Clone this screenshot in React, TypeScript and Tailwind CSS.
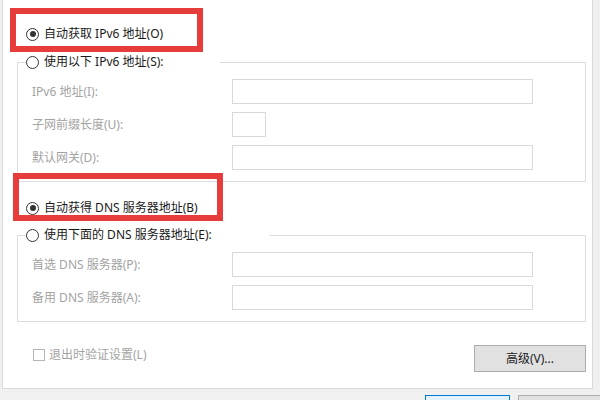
import React from "react";

const Radio = ({ checked, label }: { checked?: boolean; label: string }) => (
	<div className="flex items-center h-[16px]">
		<span className="w-[13px] h-[13px] rounded-full border border-[#333] bg-white flex items-center justify-center">
			{checked && <span className="w-[6px] h-[6px] rounded-full bg-[#333]" />}
		</span>
		<span className="ml-[5px] text-[#1a1a1a] whitespace-nowrap">{label}</span>
	</div>
);

const Field = ({ label, small }: { label: string; small?: boolean }) => (
	<div className="flex items-center h-[25px]">
		<span className="w-[200px] text-[#a3a3a3] whitespace-nowrap">{label}</span>
		<div
			className={
				small
					? "w-[34px] h-[25px] border border-[#d9d9d9] bg-white"
					: "w-[301px] h-[25px] border border-[#d9d9d9] bg-white"
			}
		/>
	</div>
);

const App = () => {
	return (
		<div className="w-[600px] h-[400px] bg-[#f0f0f0] overflow-hidden relative font-['Noto_Sans','Noto_Sans_CJK_SC',sans-serif] text-[12px] leading-[16px]">
			<div className="ml-[2px] w-[591px] h-[389px] bg-white border-l border-r border-b border-[#dadada] pl-[14px] pt-[26px]">
				<div className="ml-[9px]">
					<Radio checked label="自动获取 IPv6 地址(O)" />
				</div>

				<fieldset className="mt-[12px] w-[569px] border border-[#dcdcdc] pb-[11px]">
					<legend className="ml-[8px] w-[194px]">
						<Radio label="使用以下 IPv6 地址(S):" />
					</legend>
					<div className="pt-[9px] pl-[14px] flex flex-col gap-[8px]">
						<Field label="IPv6 地址(I):" />
						<Field label="子网前缀长度(U):" small />
						<Field label="默认网关(D):" />
					</div>
				</fieldset>

				<div className="ml-[9px] mt-[18px]">
					<Radio checked label="自动获得 DNS 服务器地址(B)" />
				</div>

				<fieldset className="mt-[11px] w-[569px] border border-[#dcdcdc] pb-[11px]">
					<legend className="ml-[8px] w-[244px]">
						<Radio label="使用下面的 DNS 服务器地址(E):" />
					</legend>
					<div className="pt-[9px] pl-[14px] flex flex-col gap-[8px]">
						<Field label="首选 DNS 服务器(P):" />
						<Field label="备用 DNS 服务器(A):" />
					</div>
				</fieldset>

				<div className="mt-[23px] w-[569px] flex justify-between items-start">
					<div className="flex items-center pl-[16px] mt-[2px]">
						<span className="w-[12px] h-[12px] border border-[#b5b5b5] bg-white" />
						<span className="ml-[4px] text-[#a3a3a3]">退出时验证设置(L)</span>
					</div>
					<button className="w-[112px] h-[27px] bg-[#e1e1e1] border border-[#adadad] text-[#1a1a1a]">
						高级(V)...
					</button>
				</div>
			</div>

			<div className="mt-[6px] pl-[425px] flex gap-[8px]">
				<div className="shrink-0 w-[85px] h-[23px] bg-[#e5f1fb] border border-[#0078d7]" />
				<div className="shrink-0 w-[85px] h-[23px] bg-[#e1e1e1] border border-[#adadad]" />
			</div>

			<div className="absolute left-[10px] top-[8px] w-[193px] h-[44px] border-[6px] border-[#e63c3c]" />
			<div className="absolute left-[13px] top-[173px] w-[210px] h-[48px] border-[6px] border-[#e63c3c]" />
		</div>
	);
};

export default App;
